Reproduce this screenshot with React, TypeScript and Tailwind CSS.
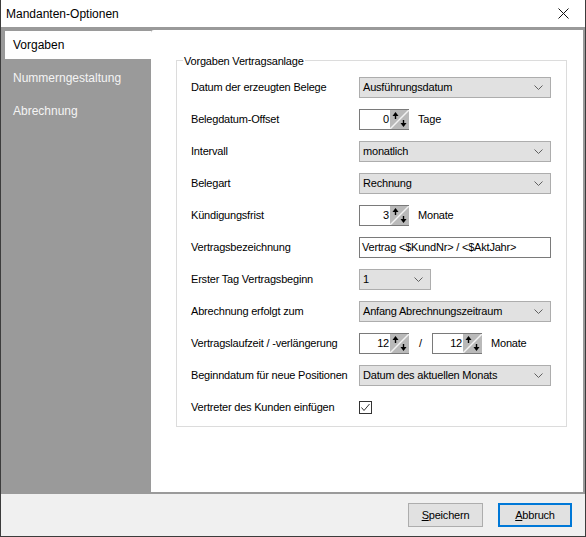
import React from 'react';

const font = { fontFamily: '"Liberation Sans", Arial, sans-serif' };

function Chevron() {
    return (
        <svg width="9" height="5" viewBox="0 0 9 5" className="shrink-0">
            <polyline points="0.5,0.5 4.5,4.5 8.5,0.5" fill="none" stroke="#606060" strokeWidth="1" />
        </svg>
    );
}

function Combo({ value, width = 'w-[192px]' }: { value: string; width?: string }) {
    return (
        <div className={`${width} flex h-[21px] items-center justify-between border border-[#adadad] bg-[#e1e1e1] pr-[7px] pl-[3px]`}>
            <span className="text-[11px] tracking-[-0.2px] text-black">{value}</span>
            <Chevron />
        </div>
    );
}

function SpinIcon() {
    return (
        <svg width="19" height="19" viewBox="0 0 19 19" className="mr-[-1px] shrink-0">
            <rect x="0" y="0" width="19" height="19" fill="#b9b9b9" />
            <line x1="19" y1="0" x2="0" y2="19" stroke="#f2f2f2" strokeWidth="1.5" />
            <path d="M2.5 6 L5.5 2 L8.5 6 Z" fill="#000" />
            <rect x="4.8" y="5" width="1.4" height="4" fill="#000" />
            <path d="M10.5 13 L13.5 17 L16.5 13 Z" fill="#000" />
            <rect x="12.8" y="10" width="1.4" height="4" fill="#000" />
        </svg>
    );
}

function Spinner({ value }: { value: string }) {
    return (
        <div className="flex h-[21px] w-[50px] items-center border border-[#7a7a7a] bg-white">
            <span className="flex-1 pr-[1px] text-right text-[11px] tracking-[-0.2px] text-black">{value}</span>
            <SpinIcon />
        </div>
    );
}

function Row({ label, children }: { label: string; children: React.ReactNode }) {
    return (
        <div className="flex h-[32px] items-center">
            <div className="w-[168px] text-[11px] tracking-[-0.2px] text-black">{label}</div>
            <div className="flex items-center">{children}</div>
        </div>
    );
}

export default function App() {
    return (
        <div style={font} className="flex h-[537px] w-[586px] flex-col border-x border-b border-[#3c3c3c] bg-[#f0f0f0] select-none">
            {/* Titelleiste */}
            <div className="flex h-[27px] items-center justify-between bg-white pl-[5px]">
                <span className="text-[12px] text-black">Mandanten-Optionen</span>
                <div className="flex h-[27px] w-[44px] items-center justify-center">
                    <svg width="11" height="11" viewBox="0 0 11 11">
                        <path d="M0.5 0.5 L10.5 10.5 M10.5 0.5 L0.5 10.5" stroke="#111" strokeWidth="1" />
                    </svg>
                </div>
            </div>

            {/* Hauptbereich */}
            <div className="flex flex-1 bg-[#9a9a9a] pt-[3px] pr-[2px] pb-[2px]">
                <div className="flex w-[150px] flex-col pt-[1px]">
                    <div className="ml-[4px] flex h-[28px] items-center bg-white pl-[8px] text-[12px] text-black">Vorgaben</div>
                    <div className="flex h-[38px] items-center pl-[12px] text-[12px] text-[#f4f4f4]">Nummerngestaltung</div>
                    <div className="flex h-[28px] items-center pl-[12px] text-[12px] text-[#f4f4f4]">Abrechnung</div>
                </div>

                <div className="flex-1 rounded-tl-[3px] bg-white pt-[30px] pr-[16px] pl-[25px]">
                    <div className="relative border border-[#dcdcdc] pt-[10px] pb-[3px] pl-[14px]">
                        <span className="absolute -top-[8px] left-[6px] bg-white px-[1px] text-[11px] tracking-[-0.2px] text-black">
                            Vorgaben Vertragsanlage
                        </span>
                        <Row label="Datum der erzeugten Belege">
                            <Combo value="Ausführungsdatum" />
                        </Row>
                        <Row label="Belegdatum-Offset">
                            <Spinner value="0" />
                            <span className="ml-[9px] text-[11px] tracking-[-0.2px]">Tage</span>
                        </Row>
                        <Row label="Intervall">
                            <Combo value="monatlich" />
                        </Row>
                        <Row label="Belegart">
                            <Combo value="Rechnung" />
                        </Row>
                        <Row label="Kündigungsfrist">
                            <Spinner value="3" />
                            <span className="ml-[9px] text-[11px] tracking-[-0.2px]">Monate</span>
                        </Row>
                        <Row label="Vertragsbezeichnung">
                            <div className="flex h-[21px] w-[192px] items-center border border-[#7a7a7a] bg-white pl-[2px] text-[11px] tracking-[-0.2px]">
                                Vertrag &lt;$KundNr&gt; / &lt;$AktJahr&gt;
                            </div>
                        </Row>
                        <Row label="Erster Tag Vertragsbeginn">
                            <Combo value="1" width="w-[72px]" />
                        </Row>
                        <Row label="Abrechnung erfolgt zum">
                            <Combo value="Anfang Abrechnungszeitraum" />
                        </Row>
                        <Row label="Vertragslaufzeit / -verlängerung">
                            <Spinner value="12" />
                            <span className="ml-[10px] w-[13px] text-[11px]">/</span>
                            <Spinner value="12" />
                            <span className="ml-[9px] text-[11px] tracking-[-0.2px]">Monate</span>
                        </Row>
                        <Row label="Beginndatum für neue Positionen">
                            <Combo value="Datum des aktuellen Monats" />
                        </Row>
                        <Row label="Vertreter des Kunden einfügen">
                            <div className="flex h-[13px] w-[13px] items-center justify-center border border-[#333] bg-white">
                                <svg width="11" height="11" viewBox="0 0 11 11">
                                    <polyline points="1.5,5.5 4,8.5 9.5,2" fill="none" stroke="#333" strokeWidth="1" />
                                </svg>
                            </div>
                        </Row>
                    </div>
                </div>
            </div>

            {/* Schaltflächen */}
            <div className="flex h-[42px] items-center justify-end gap-[15px] pr-[13px]">
                <button className="h-[24px] w-[75px] border border-[#adadad] bg-[#e1e1e1] text-[11px] tracking-[-0.2px] text-black">
                    <span className="underline">S</span>peichern
                </button>
                <button className="h-[24px] w-[74px] border-2 border-[#0078d7] bg-[#e1e1e1] text-[11px] tracking-[-0.2px] text-black">
                    <span className="underline">A</span>bbruch
                </button>
            </div>
        </div>
    );
}
